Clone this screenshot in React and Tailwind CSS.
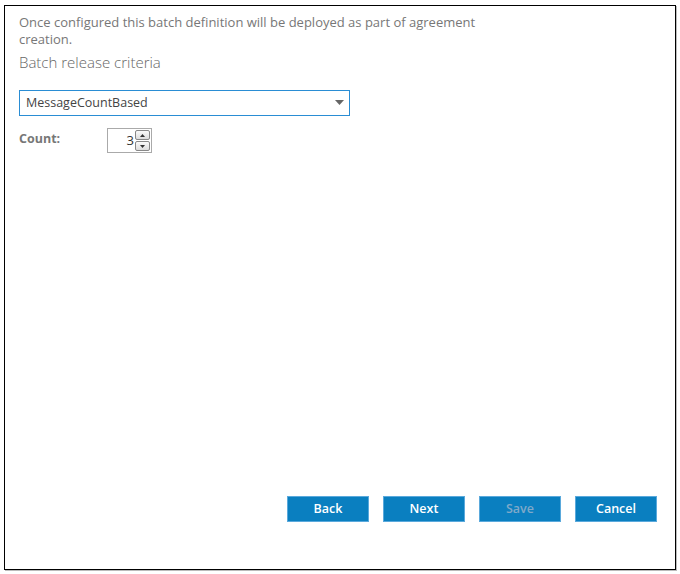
import React from "react";

export default function App() {
  const font = { fontFamily: '"Open Sans", "Noto Sans", "Liberation Sans", sans-serif' };
  return (
    <div className="w-[680px] h-[574px] bg-white pt-[5px] pl-[4px]" style={font}>
      <div className="w-[672px] h-[565px] border border-black shadow-[1px_1px_0_#bbb] flex flex-col px-[14px]">
        <p className="mt-[8px] text-[13px] leading-[17px] text-[#777] w-[475px]">
          Once configured this batch definition will be deployed as part of agreement creation.
        </p>
        <h2 className="mt-[4px] text-[15px] leading-[20px] font-light text-[#666]">Batch release criteria</h2>
        <div className="mt-[18px] w-[331px] h-[26px] border border-[#2a8dd4] flex items-center justify-between pl-[6px] pr-[5px]">
          <span className="text-[12.5px] text-[#444]">MessageCountBased</span>
          <svg width="9" height="6" viewBox="0 0 9 6"><path d="M0 0h9L4.5 5z" fill="#666" /></svg>
        </div>
        <div className="mt-[14px] flex items-start">
          <span className="text-[12.5px] font-bold text-[#777] w-[88px] leading-[17px]">Count:</span>
          <div className="mt-[-2px] w-[45px] h-[25px] border border-[#aaa] flex items-center justify-end pr-[1px] bg-white">
            <span className="text-[13px] text-[#333] mr-[1px]">3</span>
            <div className="flex flex-col gap-[1px]">
              <div className="w-[15px] h-[10px] border border-[#888] rounded-[2px] bg-gradient-to-b from-[#fafafa] to-[#ddd] flex items-center justify-center">
                <svg width="5" height="3" viewBox="0 0 5 3"><path d="M0 3h5L2.5 0z" fill="#333" /></svg>
              </div>
              <div className="w-[15px] h-[10px] border border-[#888] rounded-[2px] bg-gradient-to-b from-[#fafafa] to-[#ddd] flex items-center justify-center">
                <svg width="5" height="3" viewBox="0 0 5 3"><path d="M0 0h5L2.5 3z" fill="#333" /></svg>
              </div>
            </div>
          </div>
        </div>
        <div className="flex-1" />
        <div className="flex justify-end gap-[14px] pr-[4px] mb-[47px]">
          {["Back", "Next", "Save", "Cancel"].map((t) => (
            <button
              key={t}
              className={`w-[82px] h-[26px] bg-[#0a7fc0] border border-[#5aa9dc] text-[12.5px] font-semibold ${t === "Save" ? "text-[#7fa9c9]" : "text-white"}`}
            >
              {t}
            </button>
          ))}
        </div>
      </div>
    </div>
  );
}
